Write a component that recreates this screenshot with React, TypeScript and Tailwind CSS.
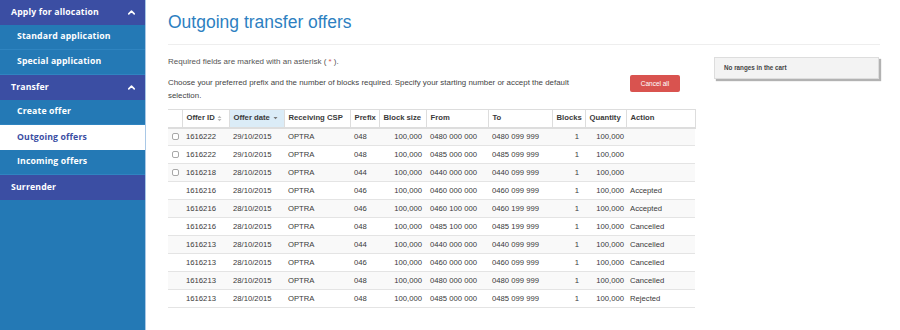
import { ChevronUp } from "lucide-react";

type Offer = {
  id: string;
  date: string;
  csp: string;
  prefix: string;
  size: string;
  from: string;
  to: string;
  blocks: string;
  qty: string;
  action: string;
  selectable: boolean;
};

const offers: Offer[] = [
  { id: "1616222", date: "29/10/2015", csp: "OPTRA", prefix: "048", size: "100,000", from: "0480 000 000", to: "0480 099 999", blocks: "1", qty: "100,000", action: "", selectable: true },
  { id: "1616222", date: "29/10/2015", csp: "OPTRA", prefix: "048", size: "100,000", from: "0485 000 000", to: "0485 099 999", blocks: "1", qty: "100,000", action: "", selectable: true },
  { id: "1616218", date: "28/10/2015", csp: "OPTRA", prefix: "044", size: "100,000", from: "0440 000 000", to: "0440 099 999", blocks: "1", qty: "100,000", action: "", selectable: true },
  { id: "1616216", date: "28/10/2015", csp: "OPTRA", prefix: "046", size: "100,000", from: "0460 000 000", to: "0460 099 999", blocks: "1", qty: "100,000", action: "Accepted", selectable: false },
  { id: "1616216", date: "28/10/2015", csp: "OPTRA", prefix: "046", size: "100,000", from: "0460 100 000", to: "0460 199 999", blocks: "1", qty: "100,000", action: "Accepted", selectable: false },
  { id: "1616216", date: "28/10/2015", csp: "OPTRA", prefix: "048", size: "100,000", from: "0485 100 000", to: "0485 199 999", blocks: "1", qty: "100,000", action: "Cancelled", selectable: false },
  { id: "1616213", date: "28/10/2015", csp: "OPTRA", prefix: "044", size: "100,000", from: "0440 000 000", to: "0440 099 999", blocks: "1", qty: "100,000", action: "Cancelled", selectable: false },
  { id: "1616213", date: "28/10/2015", csp: "OPTRA", prefix: "046", size: "100,000", from: "0460 000 000", to: "0460 099 999", blocks: "1", qty: "100,000", action: "Cancelled", selectable: false },
  { id: "1616213", date: "28/10/2015", csp: "OPTRA", prefix: "048", size: "100,000", from: "0480 000 000", to: "0480 099 999", blocks: "1", qty: "100,000", action: "Cancelled", selectable: false },
  { id: "1616213", date: "28/10/2015", csp: "OPTRA", prefix: "048", size: "100,000", from: "0485 000 000", to: "0485 099 999", blocks: "1", qty: "100,000", action: "Rejected", selectable: false },
];

function NavHeader({ label, chevron }: { label: string; chevron?: boolean }) {
  return (
    <div className="flex h-[25px] items-center justify-between bg-[#3b4ea3] pl-[11px] pr-[8px] text-white">
      <span>{label}</span>
      {chevron && <ChevronUp size={11} strokeWidth={3.5} />}
    </div>
  );
}

function NavItem({ label, active }: { label: string; active?: boolean }) {
  return (
    <div
      className={
        active
          ? "flex h-[25px] items-center bg-white pl-[17px] text-[#3b4ea3]"
          : "flex h-[25px] items-center border-b border-[#2f84c0] pl-[17px] text-white"
      }
    >
      {label}
    </div>
  );
}

function Sidebar() {
  return (
    <aside className="w-[146px] shrink-0 border-r border-[#a9c8e6] bg-[#2479b5] font-['Open_Sans',sans-serif] text-[8.7px] font-bold tracking-[0.15px]">
      <NavHeader label="Apply for allocation" chevron />
      <NavItem label="Standard application" />
      <NavItem label="Special application" />
      <NavHeader label="Transfer" chevron />
      <NavItem label="Create offer" />
      <NavItem label="Outgoing offers" active />
      <NavItem label="Incoming offers" />
      <NavHeader label="Surrender" />
    </aside>
  );
}

function SortBoth() {
  return (
    <svg width="5" height="7" viewBox="0 0 5 7" className="ml-[2px] inline-block align-middle">
      <path d="M0.5 3 L2.5 0.8 L4.5 3 Z M0.5 4 L2.5 6.2 L4.5 4 Z" fill="#bbb" />
    </svg>
  );
}

function SortDown() {
  return (
    <svg width="5" height="4" viewBox="0 0 5 4" className="ml-[3px] inline-block align-middle">
      <path d="M0.5 1 L2.5 3.2 L4.5 1 Z" fill="#777" />
    </svg>
  );
}

function OffersTable() {
  const th = "h-[18px] whitespace-nowrap border-l border-[#dddddd] px-[4px] text-left font-bold";
  const td = "h-[18px] whitespace-nowrap px-[4px]";
  return (
    <table className="w-[527px] table-fixed border-collapse text-[7.7px] text-[#3a3a3a]">
      <colgroup>
        <col className="w-[14px]" />
        <col className="w-[47px]" />
        <col className="w-[55px]" />
        <col className="w-[66px]" />
        <col className="w-[29px]" />
        <col className="w-[47px]" />
        <col className="w-[62px]" />
        <col className="w-[64px]" />
        <col className="w-[33px]" />
        <col className="w-[41px]" />
        <col className="w-[69px]" />
      </colgroup>
      <thead>
        <tr className="border-t border-b-2 border-[#dddddd]">
          <th className="h-[18px]" />
          <th className={th}>
            Offer ID
            <SortBoth />
          </th>
          <th className={th + " bg-[#dbecf7]"}>
            Offer date
            <SortDown />
          </th>
          <th className={th}>Receiving CSP</th>
          <th className={th}>Prefix</th>
          <th className={th}>Block size</th>
          <th className={th}>From</th>
          <th className={th}>To</th>
          <th className={th}>Blocks</th>
          <th className={th}>Quantity</th>
          <th className={th + " border-r"}>Action</th>
        </tr>
      </thead>
      <tbody>
        {offers.map((o, i) => (
          <tr key={i} className={(i % 2 === 0 ? "bg-[#f9f9f9] " : "bg-white ") + "border-b border-[#e4e4e4]"}>
            <td className="h-[18px] pl-[4px]">
              {o.selectable && (
                <span className="block h-[7px] w-[7px] rounded-[2px] border border-[#a8a8a8] bg-white" />
              )}
            </td>
            <td className={td}>{o.id}</td>
            <td className={td}>{o.date}</td>
            <td className={td}>{o.csp}</td>
            <td className={td}>{o.prefix}</td>
            <td className={td + " text-right"}>{o.size}</td>
            <td className={td}>{o.from}</td>
            <td className={td}>{o.to}</td>
            <td className={td + " pr-[6px] text-right"}>{o.blocks}</td>
            <td className={td + " pr-[2px] text-right"}>{o.qty}</td>
            <td className={td}>{o.action}</td>
          </tr>
        ))}
      </tbody>
    </table>
  );
}

export default function App() {
  return (
    <div className="flex min-h-screen bg-white font-['Liberation_Sans',Arial,sans-serif]">
      <Sidebar />
      <main className="flex-1 pl-[22px] pr-[20px]">
        <h1 className="pt-[12px] text-[17.5px] leading-[20px] text-[#2d7fc1]">Outgoing transfer offers</h1>
        <div className="mt-[12px] border-t border-[#eeeeee]" />
        <div className="flex">
          <div className="w-[527px]">
            <p className="mt-[11px] text-[8px] leading-[12px] text-[#555]">
              Required fields are marked with an asterisk ( <span className="text-[#d9534f]">*</span> ).
            </p>
            <div className="mt-[8px] flex items-start">
              <p className="w-[418px] text-[7.9px] leading-[13px] text-[#444]">
                Choose your preferred prefix and the number of blocks required. Specify your starting number or
                accept the default selection.
              </p>
              <button className="ml-[44px] mt-[-1px] h-[17px] w-[50px] rounded-[2px] bg-[#d9534f] text-[6.5px] text-white">
                Cancel all
              </button>
            </div>
            <div className="mt-[7px]">
              <OffersTable />
            </div>
          </div>
          <div className="ml-[19px] mt-[12px] w-[165px]">
            <div className="flex h-[22px] items-center border border-[#dddddd] bg-[#f3f3f3] pl-[9px] text-[6.3px] font-bold text-[#444] shadow-[2px_2px_1px_rgba(0,0,0,0.3)]">
              No ranges in the cart
            </div>
          </div>
        </div>
      </main>
    </div>
  );
}
